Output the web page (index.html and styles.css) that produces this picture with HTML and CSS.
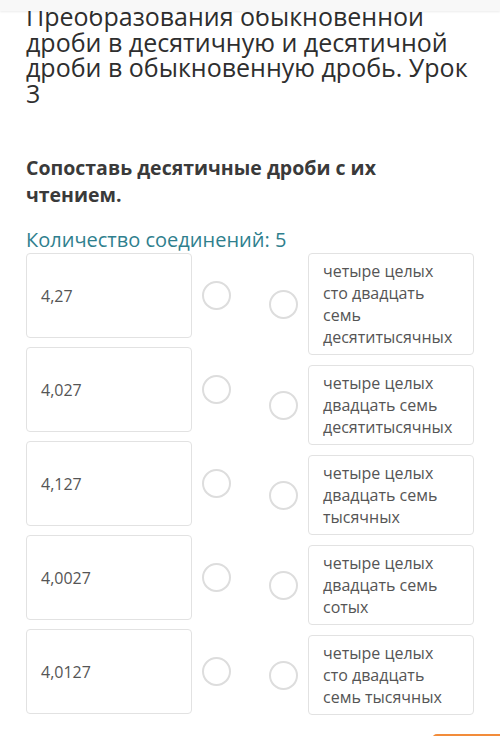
FILE: index.html
```html
<!DOCTYPE html>
<html lang="ru">
<head>
<meta charset="utf-8">
<title>Сопоставь</title>
<link rel="stylesheet" href="styles.css">
</head>
<body>
<div class="topbar"></div>
<main class="page">
  <h1 class="title">Преобразования обыкновенной дроби в десятичную и десятичной дроби в обыкновенную дробь. Урок 3</h1>
  <p class="question">Сопоставь десятичные дроби с их чтением.</p>
  <p class="count">Количество соединений: 5</p>
  <div class="match">
    <div class="col col-left">
      <div class="item"><div class="card">4,27</div><span class="dot"></span></div>
      <div class="item"><div class="card">4,027</div><span class="dot"></span></div>
      <div class="item"><div class="card">4,127</div><span class="dot"></span></div>
      <div class="item"><div class="card">4,0027</div><span class="dot"></span></div>
      <div class="item"><div class="card">4,0127</div><span class="dot"></span></div>
    </div>
    <div class="col col-right">
      <div class="item"><span class="dot"></span><div class="card card-text">четыре целых сто двадцать семь десятитысячных</div></div>
      <div class="item"><span class="dot"></span><div class="card card-text">четыре целых двадцать семь десятитысячных</div></div>
      <div class="item"><span class="dot"></span><div class="card card-text">четыре целых двадцать семь тысячных</div></div>
      <div class="item"><span class="dot"></span><div class="card card-text">четыре целых двадцать семь сотых</div></div>
      <div class="item"><span class="dot"></span><div class="card card-text">четыре целых сто двадцать семь тысячных</div></div>
    </div>
  </div>
  <div class="actions"><button class="btn" type="button">Далее</button></div>
</main>
</body>
</html>
```
FILE: styles.css
```css
html, body {
  margin: 0;
  padding: 0;
  background: #ffffff;
  overflow: hidden;
}
body {
  font-family: "Open Sans", "Noto Sans", sans-serif;
  color: #333333;
}
.topbar {
  position: fixed;
  top: 0;
  left: 0;
  right: 0;
  height: 11px;
  background: #f8f8f8;
  box-shadow: 0 1px 2px rgba(0, 0, 0, 0.08);
  z-index: 5;
}
.page {
  padding: 4px 26px 0 26px;
}
.title {
  margin: 0;
  font-size: 25px;
  line-height: 25.5px;
  font-weight: 400;
  color: #2e2e2e;
}
.question {
  margin: 48px 0 0 0;
  max-width: 420px;
  font-size: 19.5px;
  line-height: 27px;
  font-weight: 700;
  color: #3a3a3a;
}
.count {
  margin: 20px 0 0 0;
  font-size: 20px;
  line-height: 24px;
  color: #2f7f8e;
}
.match {
  margin-top: 1px;
  display: flex;
  justify-content: space-between;
  align-items: flex-start;
}
.col {
  display: flex;
  flex-direction: column;
}
.col-left {
  gap: 9px;
}
.col-right {
  gap: 10px;
}
.item {
  display: flex;
  align-items: center;
  gap: 10px;
}
.card {
  box-sizing: border-box;
  width: 166px;
  border: 1px solid #e2e2e2;
  border-radius: 4px;
  background: #ffffff;
  padding: 6px 16px 6px 14px;
  font-size: 16px;
  line-height: 22px;
  color: #555555;
}
.col-left .card {
  height: 85px;
  display: flex;
  align-items: center;
}
.dot {
  box-sizing: border-box;
  width: 29px;
  height: 29px;
  border: 2px solid #dddddd;
  border-radius: 50%;
  flex: none;
}
.actions {
  display: flex;
  justify-content: flex-end;
  margin: 19px -26px 0 0;
}
.btn {
  width: 68px;
  height: 44px;
  border: none;
  border-radius: 5px 0 0 0;
  background: #f28c3a;
  color: #ffffff;
  font-family: inherit;
  font-size: 16px;
  padding: 16px 0 0 0;
  overflow: hidden;
}
```
